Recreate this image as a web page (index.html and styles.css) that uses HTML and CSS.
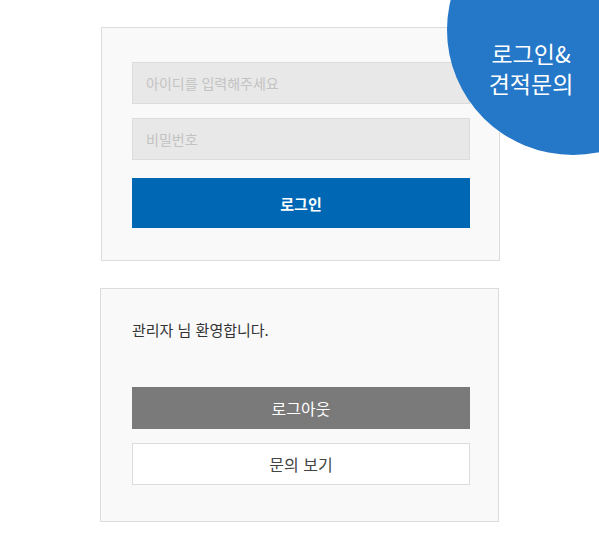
FILE: index.html
```html
<!DOCTYPE html>
<html lang="ko">
<head>
<meta charset="utf-8">
<title>로그인</title>
<link rel="stylesheet" href="styles.css">
</head>
<body>
<div class="page">
  <form class="box login-box">
    <input class="field" type="text" placeholder="아이디를 입력해주세요">
    <input class="field field-pw" type="password" placeholder="비밀번호">
    <button class="btn btn-login" type="button">로그인</button>
  </form>
  <div class="box member-box">
    <p class="welcome">관리자 님 환영합니다.</p>
    <button class="btn btn-logout" type="button">로그아웃</button>
    <button class="btn btn-inquiry" type="button">문의 보기</button>
  </div>
  <div class="badge">
    <div class="badge-text">로그인&amp;<br>견적문의</div>
  </div>
</div>
</body>
</html>
```
FILE: styles.css
```css
html, body {
  margin: 0;
  padding: 0;
  background: #ffffff;
}
body {
  font-family: "Noto Sans CJK KR", "Noto Sans", "Liberation Sans", sans-serif;
  overflow: hidden;
}
.page {
  position: relative;
  width: 599px;
  height: 551px;
  padding: 27px 0 0 101px;
  box-sizing: border-box;
  overflow: hidden;
}
.box {
  width: 399px;
  height: 234px;
  box-sizing: border-box;
  background: #f9f9f9;
  border: 1px solid #dcdcdc;
  display: flex;
  flex-direction: column;
  align-items: flex-start;
  margin: 0;
}
.login-box {
  padding: 34px 0 0 30px;
}
.member-box {
  margin: 27px 0 0 -1px;
  padding: 31px 0 0 31px;
}
.field {
  width: 338px;
  height: 42px;
  box-sizing: border-box;
  margin: 0;
  padding: 0 13px;
  background: #e8e8e8;
  border: 1px solid #dcdcdc;
  border-radius: 0;
  outline: none;
  font-family: inherit;
  font-size: 14px;
  color: #555;
}
.field::placeholder {
  color: #c3c3c3;
}
.field-pw {
  margin-top: 14px;
}
.btn {
  width: 338px;
  box-sizing: border-box;
  margin: 0;
  padding: 0;
  border: none;
  border-radius: 0;
  font-family: inherit;
  cursor: pointer;
}
.btn-login {
  margin-top: 18px;
  height: 50px;
  background: #0067b4;
  color: #ffffff;
  font-size: 15px;
  font-weight: 700;
}
.welcome {
  margin: 0;
  height: 20px;
  line-height: 20px;
  font-size: 15px;
  color: #333333;
}
.btn-logout {
  margin-top: 47px;
  height: 42px;
  background: #7a7a7a;
  color: #ffffff;
  font-size: 16px;
}
.btn-inquiry {
  margin-top: 14px;
  height: 42px;
  background: #ffffff;
  border: 1px solid #dcdcdc;
  color: #444444;
  font-size: 16px;
}
.badge {
  position: absolute;
  left: 447px;
  top: -95px;
  width: 252px;
  height: 250px;
  border-radius: 50%;
  background: rgba(30, 115, 198, 0.97);
}
.badge-text {
  width: 168px;
  padding-top: 133px;
  text-align: center;
  color: #ffffff;
  font-size: 23px;
  line-height: 30px;
}
```
